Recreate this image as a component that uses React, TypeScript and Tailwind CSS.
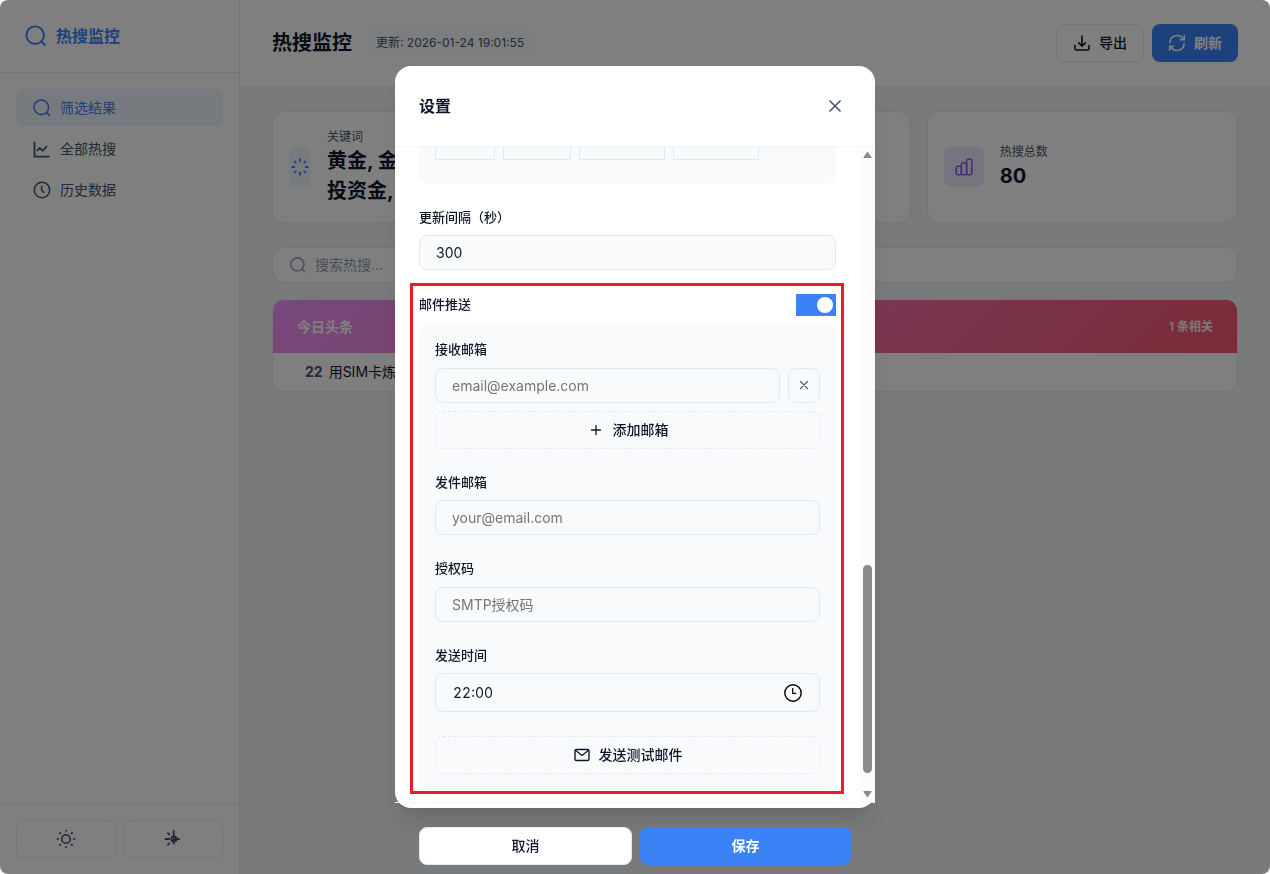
import React, { useState } from "react";

type IconProps = { className?: string };

function Svg({ className, box = 20, children }: IconProps & { box?: number; children: React.ReactNode }) {
  return (
    <svg
      className={className}
      viewBox={`0 0 ${box} ${box}`}
      fill="none"
      stroke="currentColor"
      strokeWidth={1.6}
      strokeLinecap="round"
      strokeLinejoin="round"
      aria-hidden="true"
    >
      {children}
    </svg>
  );
}

const SearchIcon = ({ className }: IconProps) => (
  <Svg className={className}>
    <circle cx="9.3" cy="9.3" r="7.3" />
    <path d="M14.6 14.6 17.4 17.4" />
  </Svg>
);

const TrendIcon = ({ className }: IconProps) => (
  <Svg className={className}>
    <path d="M2.5 2.8V17.6H17.6" strokeWidth={1.8} strokeLinecap="butt" strokeLinejoin="miter" />
    <path d="M4.8 12 7.8 9 10.7 11.8 15 7.2" strokeWidth={1.8} strokeLinecap="butt" strokeLinejoin="miter" />
  </Svg>
);

const ClockIcon = ({ className }: IconProps) => (
  <Svg className={className}>
    <circle cx="10" cy="10" r="7.7" />
    <path d="M9.6 6.2V10L11.8 12.4" />
  </Svg>
);

const SunIcon = ({ className }: IconProps) => (
  <Svg className={className}>
    <circle cx="10" cy="10" r="4.3" />
    <path
      strokeWidth={1.9}
      strokeLinecap="butt"
      d="M10 .9V2.6M10 17.4V19.1M.9 10H2.6M17.4 10H19.1M3.4 3.4 4.8 4.8M15.2 15.2 16.6 16.6M3.4 16.6 4.8 15.2M15.2 4.8 16.6 3.4"
    />
  </Svg>
);

const HalfSunIcon = ({ className }: IconProps) => (
  <Svg className={className}>
    <path
      d="M10.7 1.2V15.6M1.6 10H7M13.4 10H16.8M4.4 3.7 6.8 6.1M4.4 16.3 6.8 13.9"
      strokeWidth={1.8}
      strokeLinecap="butt"
    />
    <circle cx="10.9" cy="10" r="2.7" fill="currentColor" />
    <circle cx="9.6" cy="9.5" r="0.9" fill="#f8fafc" stroke="none" opacity="0.6" />
  </Svg>
);

const DownloadIcon = ({ className }: IconProps) => (
  <Svg className={className} box={18}>
    <path d="M9 2V12M5.7 8.9 9 12.1 12.3 8.9" />
    <path d="M2 11.6V14.4A1.6 1.6 0 0 0 3.6 16H14.4A1.6 1.6 0 0 0 16 14.4V11.6" />
  </Svg>
);

const RefreshIcon = ({ className }: IconProps) => (
  <Svg className={className} box={18}>
    <path d="M1.9 8.4A7.1 7.1 0 0 1 15.4 5.6" />
    <path d="M16.3 1.8V5.7H12.4" />
    <path d="M16.1 9.6A7.1 7.1 0 0 1 2.6 12.4" />
    <path d="M1.7 16.2V12.3H5.6" />
  </Svg>
);

const SpokesIcon = ({ className }: IconProps) => (
  <Svg className={className}>
    <path
      strokeWidth={1.8}
      strokeLinecap="butt"
      d="M10 1.6V4.9M10 15.1V18.4M1.6 10H4.9M15.1 10H18.4M4.2 4.2 6.2 6.2M13.8 13.8 15.8 15.8M4.2 15.8 6.2 13.8M13.8 6.2 15.8 4.2"
    />
  </Svg>
);

const BarsIcon = ({ className }: IconProps) => (
  <Svg className={className}>
    <rect x="2.2" y="9.3" width="5.2" height="8.4" rx="1.4" />
    <rect x="7.4" y="6" width="5.2" height="11.7" rx="1.4" />
    <rect x="12.6" y="2.3" width="5.2" height="15.4" rx="1.4" />
  </Svg>
);

const CloseIcon = ({ className }: IconProps) => (
  <Svg className={className}>
    <path d="M4.4 4.4 15.6 15.6M15.6 4.4 4.4 15.6" strokeWidth={1.8} />
  </Svg>
);

const SmallCloseIcon = ({ className }: IconProps) => (
  <Svg className={className} box={12}>
    <path d="M2.4 2.4 9.6 9.6M9.6 2.4 2.4 9.6" strokeWidth={1.3} />
  </Svg>
);

const PlusIcon = ({ className }: IconProps) => (
  <Svg className={className} box={18}>
    <path d="M9 4.5V13.5M4.5 9H13.5" strokeWidth={1.3} />
  </Svg>
);

const MailIcon = ({ className }: IconProps) => (
  <Svg className={className} box={18}>
    <rect x="2" y="3.5" width="14" height="11" rx="1.5" strokeWidth={1.4} />
    <path d="M2.4 4.2 9 9.4 15.6 4.2" strokeWidth={1.3} />
  </Svg>
);

const TimeIcon = ({ className }: IconProps) => (
  <Svg className={className} box={18}>
    <circle cx="9" cy="9" r="8.2" strokeWidth={1.4} />
    <path d="M8.7 4V9.4H12.2" strokeWidth={1.2} strokeLinecap="butt" strokeLinejoin="miter" />
  </Svg>
);

const navItems = [
  { label: "筛选结果", icon: SearchIcon, active: true },
  { label: "全部热搜", icon: TrendIcon, active: false },
  { label: "历史数据", icon: ClockIcon, active: false },
];

function Sidebar() {
  return (
    <aside className="flex w-60 shrink-0 flex-col border-r border-slate-200 bg-white">
      <div className="flex items-center gap-2 border-b border-slate-200 p-6 text-[#3b82f6]">
        <SearchIcon className="size-6" />
        <span className="text-base leading-6 font-semibold">热搜监控</span>
      </div>
      <nav className="flex flex-col gap-1 p-4">
        {navItems.map(({ label, icon: Icon, active }) => (
          <a
            key={label}
            href="#"
            className={
              active
                ? "flex items-center gap-2 rounded-lg bg-[#eff6ff] px-4 py-2 text-sm leading-normal text-[#3b82f6]"
                : "flex items-center gap-2 rounded-lg px-4 py-2 text-sm leading-normal text-slate-600"
            }
          >
            <Icon className="size-5" />
            {label}
          </a>
        ))}
      </nav>
      <div className="mt-auto flex gap-2 border-t border-slate-200 p-4 text-slate-600">
        <button aria-label="浅色模式" className="flex h-[38px] flex-1 items-center justify-center rounded-lg border border-slate-200">
          <SunIcon className="size-5" />
        </button>
        <button aria-label="自动模式" className="flex h-[38px] flex-1 items-center justify-center rounded-lg border border-slate-200">
          <HalfSunIcon className="size-5" />
        </button>
      </div>
    </aside>
  );
}

function Dashboard() {
  return (
    <div className="flex min-w-0 flex-1 flex-col bg-slate-100">
      <header className="flex items-center justify-between border-b border-slate-200 bg-white px-8 py-6">
        <div className="flex items-center gap-4">
          <h1 className="text-xl leading-normal font-semibold text-slate-900">热搜监控</h1>
          <span className="rounded-sm bg-slate-50 px-2 py-1 text-xs leading-normal text-slate-600">
            更新: 2026-01-24 19:01:55
          </span>
        </div>
        <div className="flex gap-2 text-sm">
          <button className="flex h-[38px] items-center gap-2 rounded-lg border border-slate-200 bg-white px-4 font-medium text-slate-900">
            <DownloadIcon className="size-[18px]" />
            导出
          </button>
          <button className="flex h-[38px] items-center gap-2 rounded-lg bg-[#3b82f6] px-4 font-semibold text-white">
            <RefreshIcon className="size-[18px]" />
            刷新
          </button>
        </div>
      </header>

      <main className="flex flex-col px-8 py-6">
        <section className="grid grid-cols-3 gap-4">
          <div className="flex items-center gap-4 rounded-xl border border-slate-200 bg-white p-4">
            <div className="flex h-10 w-[22px] shrink-0 items-center justify-center rounded-lg bg-[#eff6ff] text-[#3b82f6]">
              <SpokesIcon className="size-5" />
            </div>
            <div>
              <div className="text-xs leading-normal text-slate-600">关键词</div>
              <div className="text-xl leading-normal font-bold text-slate-900">
                黄金, 金价
                <br />
                投资金, 金条
              </div>
            </div>
          </div>
          <div className="rounded-xl border border-slate-200 bg-white p-4" />
          <div className="flex items-center gap-4 rounded-xl border border-slate-200 bg-white p-4">
            <div className="flex size-10 shrink-0 items-center justify-center rounded-lg bg-[#ede9fe] text-[#8b5cf6]">
              <BarsIcon className="size-5" />
            </div>
            <div>
              <div className="text-xs leading-normal text-slate-600">热搜总数</div>
              <div className="text-xl leading-normal font-bold text-slate-900">80</div>
            </div>
          </div>
        </section>

        <label className="mt-6 flex h-9 items-center gap-2 rounded-xl border border-slate-200 bg-white px-4 text-slate-400">
          <SearchIcon className="size-[18px]" />
          <input
            type="text"
            aria-label="搜索热搜"
            placeholder="搜索热搜..."
            className="min-w-0 flex-1 text-sm text-slate-900 outline-none placeholder:text-slate-400"
          />
        </label>

        <section className="mt-4 overflow-hidden rounded-xl border border-slate-200 bg-white">
          <div className="flex items-center justify-between bg-[linear-gradient(135deg,#f093fb_0%,#f5576c_100%)] px-6 py-4 text-white">
            <h2 className="text-sm leading-normal font-semibold">今日头条</h2>
            <span className="text-xs leading-normal font-semibold opacity-90">1 条相关</span>
          </div>
          <div className="flex items-center gap-1.5 px-8 py-2 text-sm leading-[22px]">
            <span className="font-bold text-slate-600">22</span>
            <span className="text-slate-900">用SIM卡炼金</span>
          </div>
        </section>
      </main>
    </div>
  );
}

const inputClass =
  "h-[35px] w-full min-w-0 rounded-lg border border-slate-200 bg-slate-50 px-4 text-sm text-slate-900 outline-none placeholder:text-[#757575]";
const labelClass = "mb-2 block text-[13px] leading-normal font-medium text-slate-900";
const dashedClass =
  "flex h-[38px] w-full items-center justify-center gap-2 rounded-lg border border-dashed border-slate-200 text-sm font-medium text-slate-900";

function Scrollbar() {
  return (
    <div className="flex w-[15px] shrink-0 flex-col items-center bg-[#fcfcfc] py-1" aria-hidden="true">
      <svg className="h-2 w-[9px]" viewBox="0 0 9 8">
        <path d="M4.5.5 8.6 6.2Q8.7 7 8 7H1Q.3 7 .4 6.2Z" fill="#8b8b8b" />
      </svg>
      <div className="grow-[406]" />
      <div className="w-[9px] grow-[208] rounded-full bg-[#8b8b8b]" />
      <div className="grow-[17]" />
      <svg className="h-2 w-[9px]" viewBox="0 0 9 8">
        <path d="M4.5 7.5 8.6 1.8Q8.7 1 8 1H1Q.3 1 .4 1.8Z" fill="#8b8b8b" />
      </svg>
    </div>
  );
}

function SettingsDialog() {
  const [interval, setIntervalValue] = useState("300");
  const [mailOn, setMailOn] = useState(true);
  const [time, setTime] = useState("22:00");

  return (
    <div className="fixed inset-0 z-10 flex items-center justify-center rounded-lg bg-black/50">
      <div
        role="dialog"
        aria-label="设置"
        className="flex h-[85vh] w-full max-w-[480px] flex-col rounded-2xl bg-white shadow-xl"
      >
        <div className="flex shrink-0 items-center justify-between border-b border-slate-100 p-6">
          <h2 className="text-base leading-normal font-semibold text-slate-900">设置</h2>
          <button aria-label="关闭" className="flex size-8 items-center justify-center text-slate-600">
            <CloseIcon className="size-[18px]" />
          </button>
        </div>

        <div className="flex h-[75vh] shrink-0 overflow-hidden">
          <div className="min-w-0 flex-1 px-6">
            <div className="mb-6 flex gap-2 rounded-b-lg bg-slate-50 px-4 pb-6">
              <div className="h-[13px] w-[60px] border border-t-0 border-slate-200" />
              <div className="h-[13px] w-[68px] border border-t-0 border-slate-200" />
              <div className="h-[13px] w-[86px] border border-t-0 border-slate-200" />
              <div className="h-[13px] w-[86px] border border-t-0 border-slate-200" />
            </div>

            <div className="mb-6">
              <label htmlFor="interval" className={labelClass}>
                更新间隔（秒）
              </label>
              <input
                id="interval"
                className={inputClass}
                value={interval}
                onChange={(e) => setIntervalValue(e.target.value)}
              />
            </div>

            <div className="relative">
              <div className="mb-2 flex items-center justify-between">
                <label htmlFor="mail" className="text-[13px] leading-normal font-medium text-slate-900">
                  邮件推送
                </label>
                <input
                  id="mail"
                  type="checkbox"
                  role="switch"
                  checked={mailOn}
                  onChange={(e) => setMailOn(e.target.checked)}
                  className="flex h-[22px] w-10 appearance-none items-center bg-slate-300 px-[3px] before:size-4 before:rounded-full before:bg-white before:content-[''] checked:justify-end checked:bg-[#3b82f6]"
                />
              </div>

              <div className="flex flex-col gap-6 rounded-lg bg-slate-50 p-4">
                <div>
                  <label htmlFor="receiver" className={labelClass}>
                    接收邮箱
                  </label>
                  <div className="mb-2 flex gap-2">
                    <input id="receiver" type="email" placeholder="email@example.com" className={inputClass} />
                    <button
                      aria-label="删除邮箱"
                      className="flex w-8 shrink-0 items-center justify-center rounded-lg border border-slate-200 text-slate-600"
                    >
                      <SmallCloseIcon className="size-3" />
                    </button>
                  </div>
                  <button className={dashedClass}>
                    <PlusIcon className="size-[18px]" />
                    添加邮箱
                  </button>
                </div>

                <div>
                  <label htmlFor="sender" className={labelClass}>
                    发件邮箱
                  </label>
                  <input id="sender" type="email" placeholder="your@email.com" className={inputClass} />
                </div>

                <div>
                  <label htmlFor="code" className={labelClass}>
                    授权码
                  </label>
                  <input id="code" type="password" placeholder="SMTP授权码" className={inputClass} />
                </div>

                <div>
                  <label htmlFor="time" className={labelClass}>
                    发送时间
                  </label>
                  <div className="flex h-[39px] items-center rounded-lg border border-slate-200 px-[17px]">
                    <input
                      id="time"
                      value={time}
                      onChange={(e) => setTime(e.target.value)}
                      className="min-w-0 flex-1 text-sm text-slate-900 tabular-nums outline-none"
                    />
                    <button aria-label="选择时间" className="text-black">
                      <TimeIcon className="size-[18px]" />
                    </button>
                  </div>
                </div>

                <button className={dashedClass}>
                  <MailIcon className="size-[18px]" />
                  发送测试邮件
                </button>
              </div>

              <div className="pointer-events-none absolute -top-[11px] -right-2 -bottom-1 -left-[9px] border-3 border-[#ed1c24]" />
            </div>
          </div>
          <Scrollbar />
        </div>

        <div className="flex shrink-0 gap-2 border-t border-slate-100 p-6 text-sm">
          <button className="h-[38px] flex-1 rounded-lg border border-slate-200 bg-white font-medium text-slate-900">取消</button>
          <button className="h-[38px] flex-1 rounded-lg bg-[#3b82f6] font-semibold text-white">保存</button>
        </div>
      </div>
    </div>
  );
}

export default function App() {
  return (
    <div lang="zh-CN" className="font-['Inter','Noto_Sans_CJK_SC',sans-serif]">
      <div className="flex min-h-screen overflow-hidden rounded-lg">
        <Sidebar />
        <Dashboard />
      </div>
      <SettingsDialog />
    </div>
  );
}
